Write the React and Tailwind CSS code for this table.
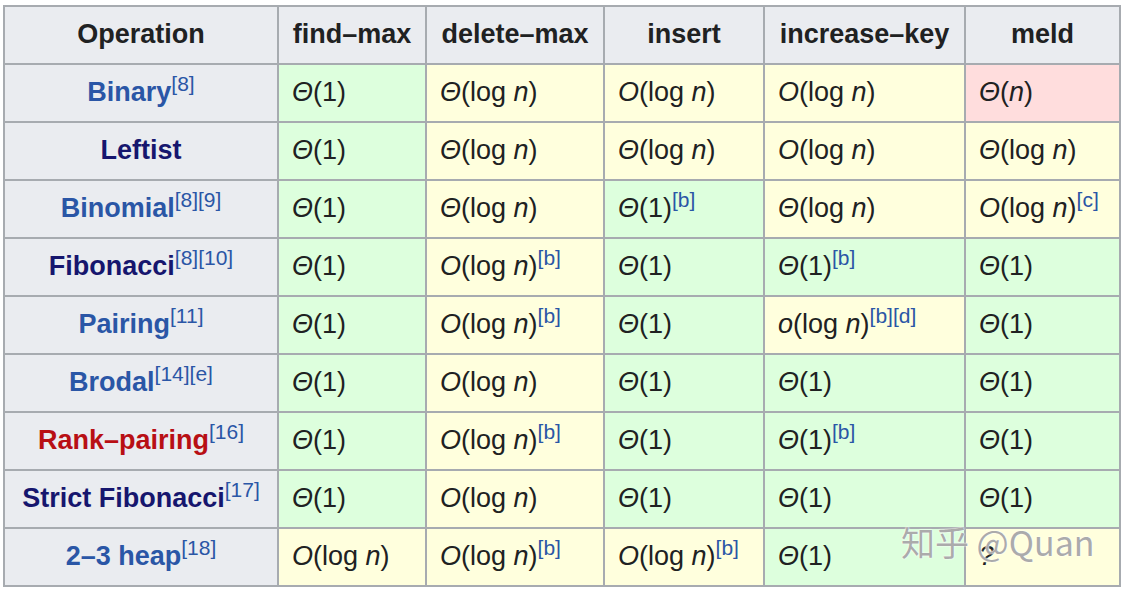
import React from "react";

const G = "bg-[#ddffdd]";
const Y = "bg-[#ffffdd]";
const R = "bg-[#ffdddd]";

const Th = () => <i>Θ</i>;
const Oh = () => <i>O</i>;
const N = () => <i>n</i>;

const Ref = ({ children }) => (
  <sup className="text-[21px] text-[#2a56a6] font-normal">{children}</sup>
);

const one = (
  <>
    <Th />(1)
  </>
);
const thLog = (
  <>
    <Th />(log <N />)
  </>
);
const oLog = (
  <>
    <Oh />(log <N />)
  </>
);

const BLUE = "text-[#2a56a6]";
const NAVY = "text-[#16166e]";
const RED = "text-[#b80f14]";

const rows = [
  {
    name: "Binary",
    color: BLUE,
    refs: "[8]",
    cells: [
      [G, one],
      [Y, thLog],
      [Y, oLog],
      [Y, oLog],
      [R, <><Th />(<N />)</>],
    ],
  },
  {
    name: "Leftist",
    color: NAVY,
    refs: "",
    cells: [
      [G, one],
      [Y, thLog],
      [Y, thLog],
      [Y, oLog],
      [Y, thLog],
    ],
  },
  {
    name: "Binomial",
    color: BLUE,
    refs: "[8][9]",
    cells: [
      [G, one],
      [Y, thLog],
      [G, <>{one}<Ref>[b]</Ref></>],
      [Y, thLog],
      [Y, <>{oLog}<Ref>[c]</Ref></>],
    ],
  },
  {
    name: "Fibonacci",
    color: NAVY,
    refs: "[8][10]",
    cells: [
      [G, one],
      [Y, <>{oLog}<Ref>[b]</Ref></>],
      [G, one],
      [G, <>{one}<Ref>[b]</Ref></>],
      [G, one],
    ],
  },
  {
    name: "Pairing",
    color: BLUE,
    refs: "[11]",
    cells: [
      [G, one],
      [Y, <>{oLog}<Ref>[b]</Ref></>],
      [G, one],
      [Y, <><i>o</i>(log <N />)<Ref>[b][d]</Ref></>],
      [G, one],
    ],
  },
  {
    name: "Brodal",
    color: BLUE,
    refs: "[14][e]",
    cells: [
      [G, one],
      [Y, oLog],
      [G, one],
      [G, one],
      [G, one],
    ],
  },
  {
    name: "Rank–pairing",
    color: RED,
    refs: "[16]",
    cells: [
      [G, one],
      [Y, <>{oLog}<Ref>[b]</Ref></>],
      [G, one],
      [G, <>{one}<Ref>[b]</Ref></>],
      [G, one],
    ],
  },
  {
    name: "Strict Fibonacci",
    color: NAVY,
    refs: "[17]",
    cells: [
      [G, one],
      [Y, oLog],
      [G, one],
      [G, one],
      [G, one],
    ],
  },
  {
    name: "2–3 heap",
    color: BLUE,
    refs: "[18]",
    cells: [
      [Y, oLog],
      [Y, <>{oLog}<Ref>[b]</Ref></>],
      [Y, <>{oLog}<Ref>[b]</Ref></>],
      [G, one],
      [Y, <i>?</i>],
    ],
  },
];

const headers = ["Operation", "find–max", "delete–max", "insert", "increase–key", "meld"];

export default function App() {
  return (
    <div
      className="relative w-[1126px] h-[592px] bg-white overflow-hidden pt-[5px] pl-[3px] text-[#202122]"
      style={{ fontFamily: '"Liberation Sans", Arial, sans-serif' }}
    >
      <table className="table-fixed border-collapse w-[1117px] text-[27px] leading-tight">
        <colgroup>
          <col className="w-[274px]" />
          <col className="w-[148px]" />
          <col className="w-[178px]" />
          <col className="w-[160px]" />
          <col className="w-[201px]" />
          <col className="w-[155px]" />
        </colgroup>
        <thead>
          <tr className="h-[58px]">
            {headers.map((h) => (
              <th
                key={h}
                className="border-2 border-[#a7abb0] bg-[#eaecf0] font-bold text-center px-2 whitespace-nowrap"
              >
                {h}
              </th>
            ))}
          </tr>
        </thead>
        <tbody>
          {rows.map((r) => (
            <tr key={r.name} className="h-[58px]">
              <th className="border-2 border-[#a7abb0] bg-[#eaecf0] font-bold text-center px-2 whitespace-nowrap">
                <span className={r.color}>{r.name}</span>
                {r.refs && <Ref>{r.refs}</Ref>}
              </th>
              {r.cells.map(([bg, content], i) => (
                <td
                  key={i}
                  className={`border-2 border-[#a7abb0] ${bg} pl-[13px] pr-1 whitespace-nowrap align-middle`}
                >
                  {content}
                </td>
              ))}
            </tr>
          ))}
        </tbody>
      </table>
      {/* watermark over the last row */}
      <div
        className="absolute left-[901px] top-[516px] text-[34px] text-[#ababab] whitespace-nowrap [text-shadow:0_0_2px_#ffffff,0_0_1px_#ffffff]"
        style={{ fontFamily: '"Noto Sans CJK SC", sans-serif' }}
      >
        知乎 @Quan
      </div>
    </div>
  );
}
